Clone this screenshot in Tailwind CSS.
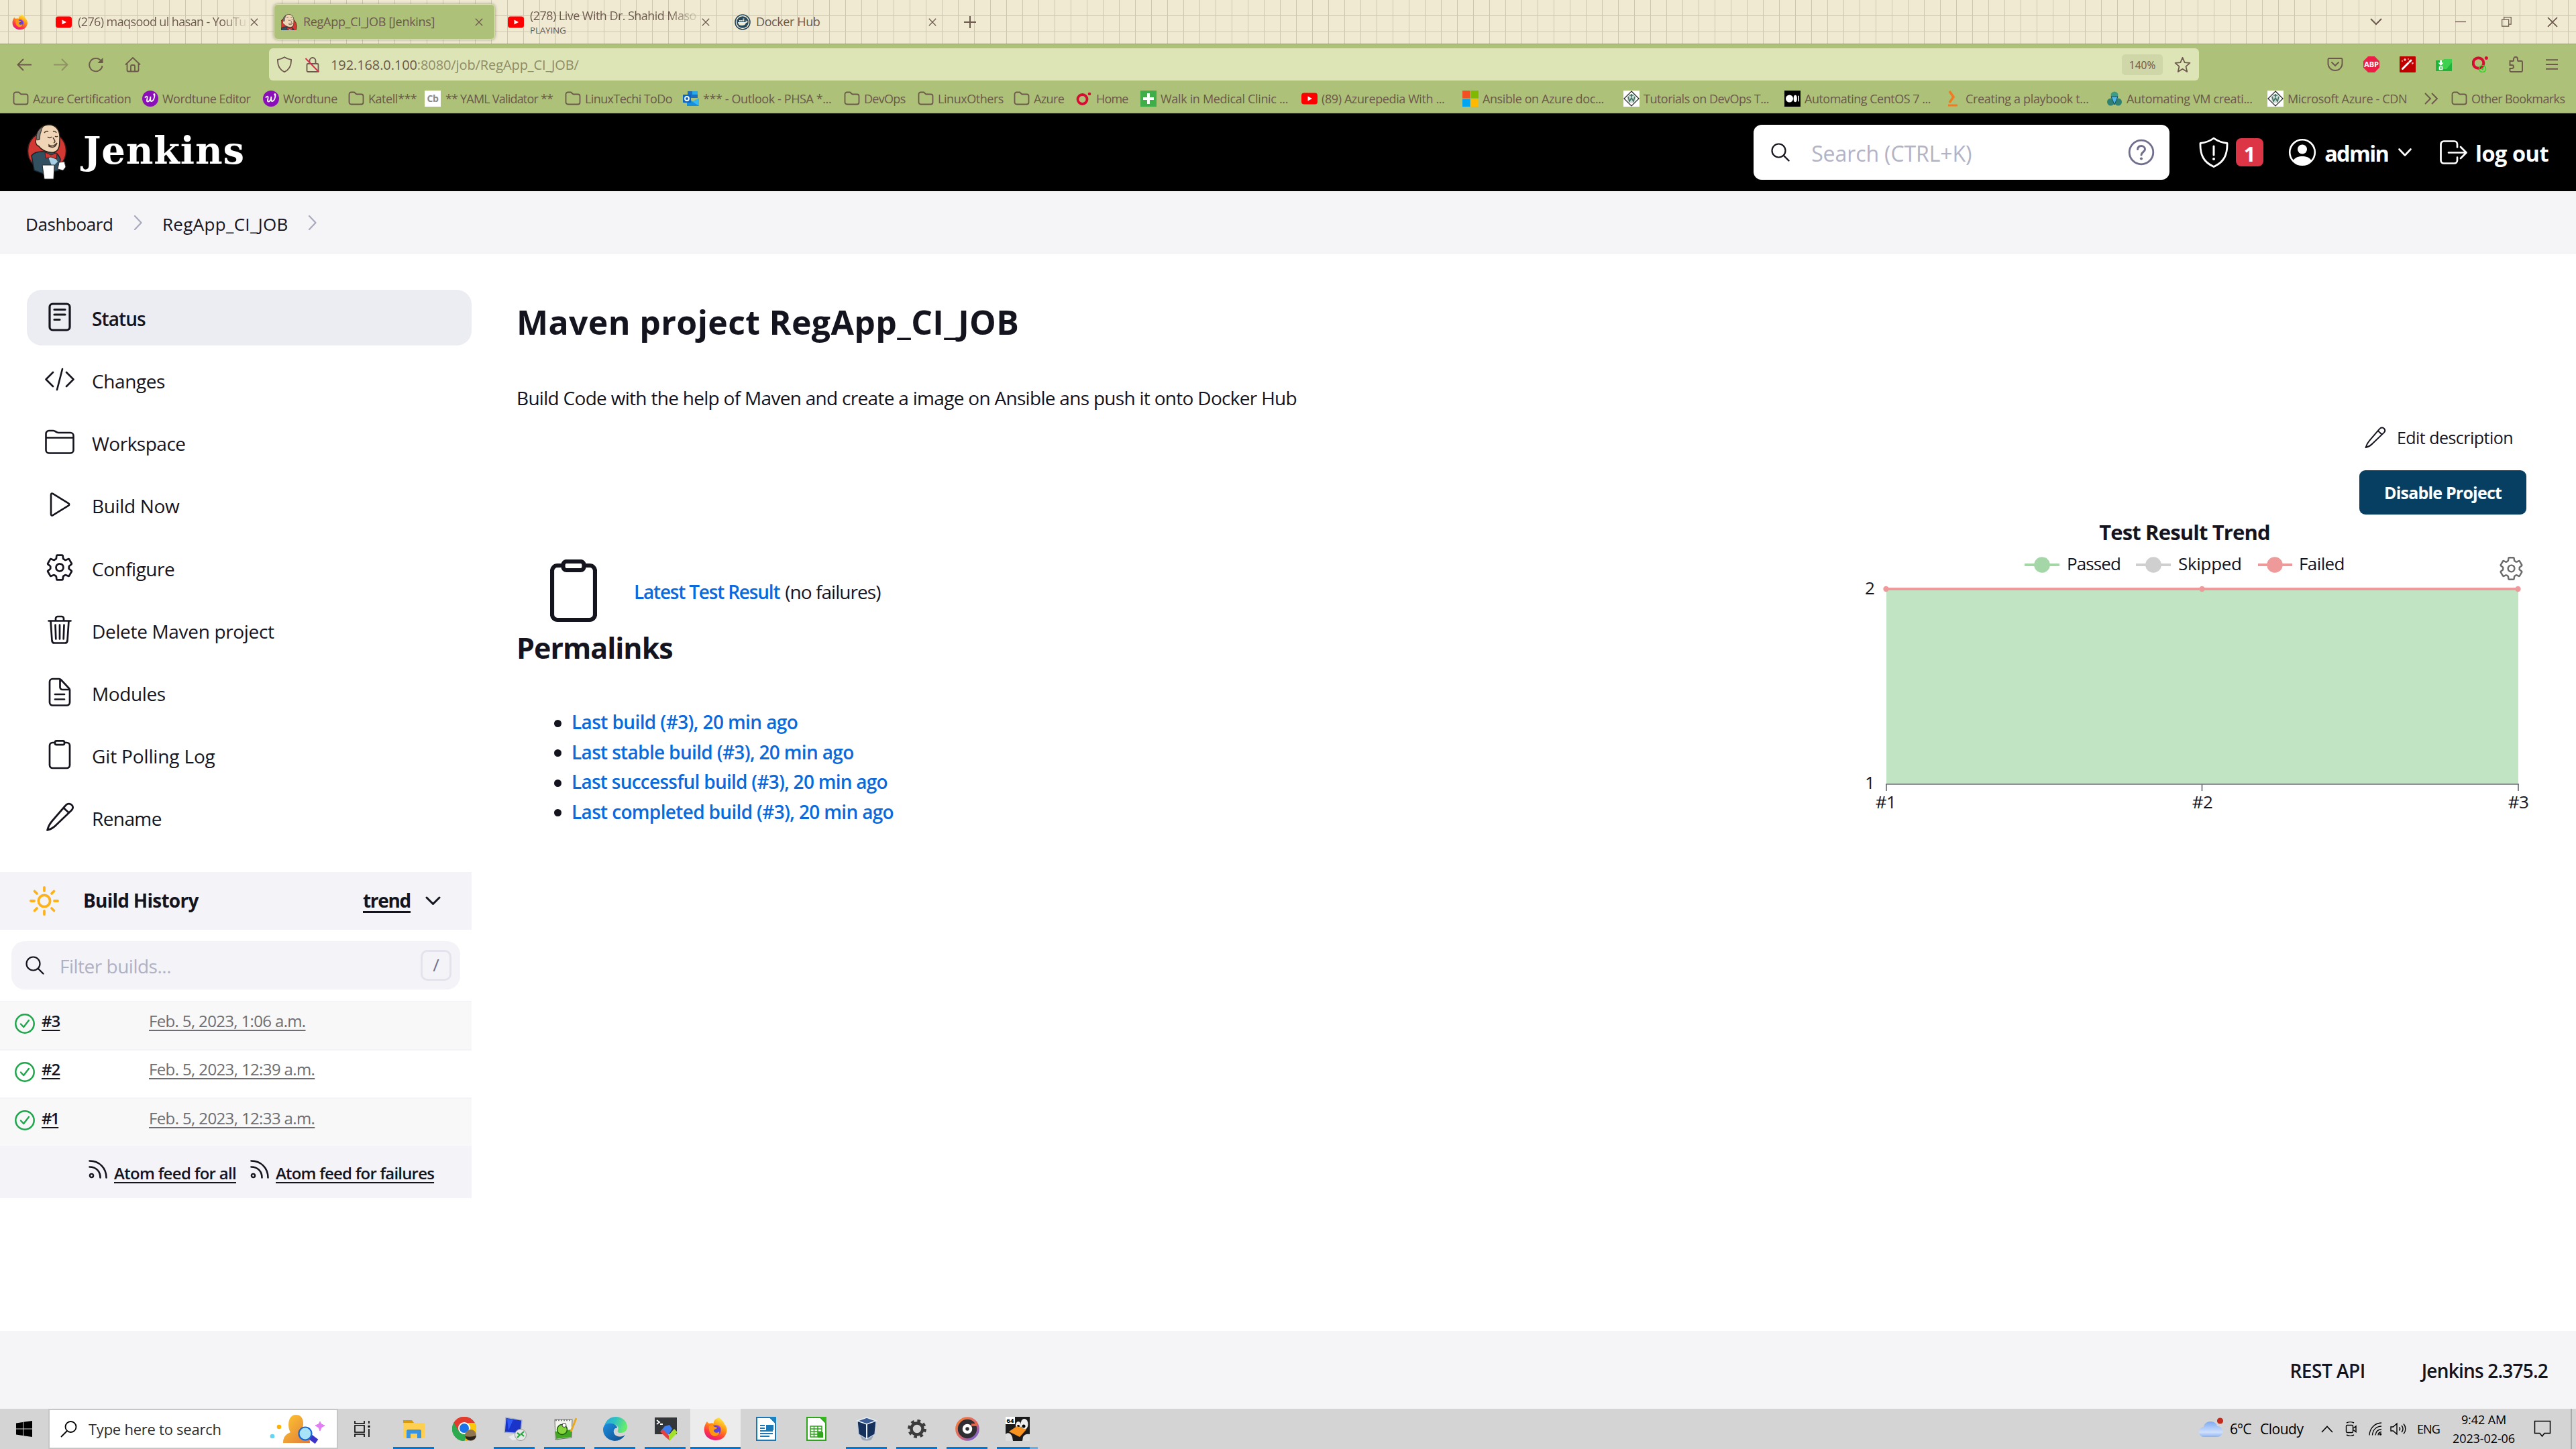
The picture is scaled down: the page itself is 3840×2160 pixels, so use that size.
<!DOCTYPE html>
<html lang="en">
<head>
<meta charset="utf-8">
<title>RegApp_CI_JOB [Jenkins]</title>
<script src="https://cdn.jsdelivr.net/npm/@tailwindcss/browser@4"></script>
</head>
<body class="w-[3840px] h-[2160px] overflow-hidden bg-white flex flex-col font-['Open_Sans','Noto_Sans',sans-serif] text-[#14141f]">

<svg class="absolute size-0">
  <defs>
    <linearGradient id="ffg" x1="0.8" y1="0" x2="0.3" y2="1"><stop offset="0" stop-color="#fff44f"/><stop offset=".4" stop-color="#ff980e"/><stop offset=".75" stop-color="#ff3647"/><stop offset="1" stop-color="#e31587"/></linearGradient>
    <linearGradient id="edg" x1="0" y1="0" x2="1" y2=".3"><stop offset="0" stop-color="#2ba6e1"/><stop offset=".5" stop-color="#2fc2c0"/><stop offset="1" stop-color="#66eb6e"/></linearGradient>
    <linearGradient id="edb" x1="0" y1="0" x2="1" y2="1"><stop offset="0" stop-color="#1b8fe0"/><stop offset="1" stop-color="#114a8b"/></linearGradient>
    <linearGradient id="org" x1="0" y1="0" x2="1" y2="1"><stop offset="0" stop-color="#ffc72e"/><stop offset="1" stop-color="#e07b3c"/></linearGradient>
    <linearGradient id="mus" x1="0" y1="0" x2="1" y2="1"><stop offset="0" stop-color="#ff7b2e"/><stop offset=".5" stop-color="#d86a6a"/><stop offset="1" stop-color="#6a5ae0"/></linearGradient>
    <linearGradient id="cld" x1="0" y1="0" x2="0" y2="1"><stop offset="0" stop-color="#7fabf2"/><stop offset=".7" stop-color="#cfe0fb"/><stop offset="1" stop-color="#8cb2f4"/></linearGradient>
  </defs>
  <symbol id="firefox" viewBox="0 0 36 36"><path d="M23 1c5 4 7 7 8 10 3 3 4 8 3 12-2 8-8 12-16 12S2 30 1 22C0 16 2 11 5 7c1 2 2 3 4 3 2-1 4-1 6 0-1-5 4-8 8-9z" fill="url(#ffg)"/><circle cx="18" cy="20" r="7.500" fill="#5b45d8"/><path d="M8 14c3-2 6-1 8 1 3 0 4 1 4 2-2 2-5 1-5 4 1 3 5 4 8 1 1 4-3 7-7 7-6-1-9-8-8-15z" fill="#ff980e"/><path d="M18 13c4-1 8 2 8 6l-3-3z" fill="#b833e1"/></symbol>
  <symbol id="yt" viewBox="0 0 24 24"><rect y="3.500" width="24" height="17" rx="4" fill="#f00"/><path d="M9.500 8.500v7l6.500-3.500z" fill="#fff"/></symbol>
  <symbol id="x" viewBox="0 0 12 12"><path d="M.8.8l10.400 10.400M11.200.8L.8 11.200" stroke="#6c584c" stroke-width="1.300" fill="none"/></symbol>
  <symbol id="folder" viewBox="0 0 24 24"><path d="M1.500 5.500a3 3 0 013-3h4.500l3.500 3h7a3 3 0 013 3v9a3 3 0 01-3 3h-15a3 3 0 01-3-3z" fill="none" stroke="#6c584c" stroke-width="1.800"/></symbol>
  <symbol id="word" viewBox="0 0 24 24"><circle cx="12" cy="12" r="12" fill="#8b0fb8"/><path d="M4.500 10c2.500-2.500 3.500-1.500 3 1.500-.6 3-1 5 .7 5 2.200 0 3.800-4 4.300-7.500-.4 3.500-.6 7 1.400 7 2.600 0 5-6 4.600-10-.2-1.500-1.400-1-1.200.5" fill="none" stroke="#fff" stroke-width="1.800" stroke-linecap="round"/></symbol>
  <symbol id="mantra" viewBox="0 0 24 24"><rect width="24" height="24" fill="#fff"/><path d="M12 1l11 11-11 11L1 12z" fill="none" stroke="#222" stroke-width="1.200"/><circle cx="12" cy="12" r="6.500" fill="#cfd8d2"/><path d="M7 9l2 7 3-5 3 5 2-7M12 5v5M9 7h6" stroke="#3e7466" stroke-width="1.600" fill="none"/></symbol>
  <symbol id="man" viewBox="0 0 60 84">
    <ellipse cx="30" cy="40" rx="28.500" ry="29" fill="#d33833" stroke="#3a1a1a" stroke-width="1.500"/>
    <path d="M7 47c3-4 10-6 16-6l16 1c6 1 9 5 11 10l-3 17-22 5-14-5z" fill="#335061" stroke="#16242c" stroke-width="1.500"/>
    <path d="M30 46l12 0-2 16z" fill="#fff"/><path d="M33 52l7-5 6 9-8 8z" fill="#a9cfe4"/>
    <path d="M16 16C18 5 26 1 33 1c10 0 16 8 16 18 0 12 0 21-9 23-8 1-18-3-22-9-4-1-6-6-4-11 0-2 2-4 2-6z" fill="#f0d6b7" stroke="#2b2018" stroke-width="1.400"/>
    <path d="M14 22c0-9 3-15 11-19-4 4-3 8-5 11l-1 9-3 1z" fill="#7a7674" stroke="#2b2018"/>
    <path d="M26 13c2-3 4-3 6-2M39 11c2-1 4 0 5 2M31 19c2 2 4 2 6 0M42 18c1 1 3 1 4 0M39 20c2 4 5 6 1 8M33 31c4 3 9 1 12-3-2 6-6 8-12 5z" fill="none" stroke="#4a372a" stroke-width="1.500"/>
    <path d="M27 42l9 4 9-3-1 9-8-3-8 2z" fill="#d33833" stroke="#4d1a18"/>
    <path d="M23 61h18l-1 21H26z" fill="#fff" stroke="#222"/><path d="M48 57l8-1 2 8-4 5-8-2z" fill="#fff" stroke="#333"/>
  </symbol>
  <symbol id="medium" viewBox="0 0 24 24"><rect width="24" height="24" fill="#000"/><circle cx="7.500" cy="12" r="5.500" fill="#fff"/><ellipse cx="16.200" cy="12" rx="2.600" ry="5.200" fill="#fff"/><rect x="20" y="7.500" width="1.600" height="9" rx=".8" fill="#fff"/></symbol>

  <symbol id="status" viewBox="0 0 44 44"><rect x="7" y="2" width="30" height="39" rx="4.500" fill="none" stroke="#14141f" stroke-width="3.200"/><path d="M14 10.500h16M14 18h16M14 25.500h8" stroke="#14141f" stroke-width="3.200" stroke-linecap="round"/></symbol>
  <symbol id="code" viewBox="0 0 44 44"><path d="M12 11L1.500 21.500 12 32M32 11l10.500 10.500L32 32M26 6l-8 31" fill="none" stroke="#14141f" stroke-width="2.600" stroke-linecap="round" stroke-linejoin="round"/></symbol>
  <symbol id="dir" viewBox="0 0 44 44"><path d="M1.500 34V9.500a4.500 4.500 0 014.500-4.500h6.500c3 0 4 3 7.500 3h18a4.500 4.500 0 014.500 4.500V34a4.500 4.500 0 01-4.500 4.500H6A4.500 4.500 0 011.500 34zM1.500 15.500h41" fill="none" stroke="#14141f" stroke-width="2.600"/></symbol>
  <symbol id="play" viewBox="0 0 44 44"><path d="M9 7.500v29c0 1.800 1.300 2.400 2.700 1.600l23.500-14.500c1.300-.8 1.300-2.400 0-3.200L11.700 5.900C10.300 5.100 9 5.700 9 7.500z" fill="none" stroke="#14141f" stroke-width="2.600"/></symbol>
  <symbol id="gear" viewBox="0 0 512 512"><path d="M262.290 192.310a64 64 0 1057.400 57.400 64.130 64.130 0 00-57.400-57.400zM416.390 256a154.340 154.340 0 01-1.530 20.790l45.210 35.460a10.810 10.810 0 012.450 13.750l-42.770 74a10.810 10.810 0 01-13.140 4.590l-44.900-18.080a16.110 16.110 0 00-15.170 1.750A164.480 164.480 0 01325 400.800a15.940 15.940 0 00-8.820 12.140l-6.730 47.890a11.080 11.080 0 01-10.680 9.170h-85.540a11.110 11.110 0 01-10.690-8.870l-6.720-47.820a16.070 16.070 0 00-9-12.220 155.300 155.300 0 01-21.460-12.570 16 16 0 00-15.110-1.710l-44.890 18.070a10.810 10.810 0 01-13.140-4.580l-42.770-74a10.800 10.800 0 012.450-13.750l38.210-30a16.050 16.050 0 006-14.080c-.36-4.170-.58-8.330-.58-12.500s.21-8.270.58-12.350a16 16 0 00-6.070-13.940l-38.190-30A10.810 10.810 0 0149.480 186l42.770-74a10.810 10.810 0 0113.140-4.590l44.900 18.080a16.110 16.110 0 0015.170-1.750A164.480 164.480 0 01187 111.200a15.940 15.940 0 008.820-12.140l6.730-47.890A11.080 11.080 0 01213.230 42h85.540a11.110 11.110 0 0110.690 8.870l6.720 47.820a16.070 16.070 0 009 12.220 155.300 155.300 0 0121.460 12.570 16 16 0 0015.110 1.710l44.890-18.070a10.810 10.810 0 0113.140 4.580l42.770 74a10.800 10.800 0 01-2.450 13.750l-38.210 30a16.050 16.050 0 00-6.050 14.080c.33 4.140.55 8.300.55 12.470z" fill="none" stroke="currentColor" stroke-width="32" stroke-linecap="round" stroke-linejoin="round"/></symbol>
  <symbol id="trash" viewBox="0 0 44 44"><path d="M8.500 8.500l2 29.500c.2 2 1.500 3.500 3.500 3.500h16c2 0 3.300-1.500 3.500-3.500l2-29.500M5.500 8.500h33M16 8.500V5a3 3 0 013-3h6a3 3 0 013 3v3.500M22 14.500V35.500M15.500 14.500l.8 21M28.500 14.500l-.8 21" fill="none" stroke="#14141f" stroke-width="2.700" stroke-linecap="round"/></symbol>
  <symbol id="doc" viewBox="0 0 44 44"><path d="M37 19v18a4.500 4.500 0 01-4.500 4.500h-21A4.500 4.500 0 017 37V6.500A4.500 4.500 0 0111.500 2H21c1.200 0 2 .3 2.800 1.200L35.800 16c.9.9 1.200 1.800 1.200 3zM22.500 3v11.500a3.500 3.500 0 003.500 3.500h10.500M15 25h14M15 32.500h14" fill="none" stroke="#14141f" stroke-width="2.700" stroke-linecap="round" stroke-linejoin="round"/></symbol>
  <symbol id="clip" viewBox="0 0 44 44"><path d="M29 4h3.500A4.500 4.500 0 0137 8.500v29a4.500 4.500 0 01-4.500 4.500h-21A4.500 4.500 0 017 37.500v-29A4.500 4.500 0 0111.500 4H15" fill="none" stroke="#14141f" stroke-width="2.700"/><rect x="15" y="1.400" width="14" height="5.800" rx="2.200" fill="none" stroke="#14141f" stroke-width="2.700"/></symbol>
  <symbol id="pencil" viewBox="0 0 44 44"><path d="M30 5.500l-19 22C7 32 5 36 3.500 41.500c5-1.500 9.500-3.500 13-7.500L40 11.500c2-2.500 2-5.500 0-7.500-2-2.500-6-2.500-8-.5zM28 8.500l7 6.500" fill="none" stroke="#14141f" stroke-width="2.700" stroke-linejoin="round"/></symbol>
  <symbol id="search" viewBox="0 0 28 28"><circle cx="11.500" cy="11.500" r="10" fill="none" stroke="#14141f" stroke-width="2.200"/><path d="M19 19l7.500 7.500" stroke="#14141f" stroke-width="2.400" stroke-linecap="round"/></symbol>
  <symbol id="ok" viewBox="0 0 30 30"><circle cx="15" cy="15" r="13.700" fill="none" stroke="#1ea64b" stroke-width="2.500"/><path d="M9 15.500l4.200 4.500 7.800-10" fill="none" stroke="#1ea64b" stroke-width="2.400" stroke-linecap="round" stroke-linejoin="round"/></symbol>
  <symbol id="rss" viewBox="0 0 28 28"><path d="M1.500 1.500C16 1.500 26.500 12 26.500 26.500M1.500 10.500c9.500 0 16 6.500 16 16" fill="none" stroke="#14141f" stroke-width="2.600" stroke-linecap="round"/><circle cx="4.500" cy="23.500" r="2.600" fill="none" stroke="#14141f" stroke-width="2.400"/></symbol>
  <symbol id="crumb" viewBox="0 0 14 22"><path d="M2 1l9.500 10L2 21" fill="none" stroke="#a9a9bd" stroke-width="2.200" stroke-linecap="round" stroke-linejoin="round"/></symbol>
</svg>

<!-- Tab strip -->
<header class="h-[66px] shrink-0 bg-[#f0ead2] border-b border-[#9c987f] bg-[linear-gradient(to_right,transparent_12px,#cdc7b0_12px,#cdc7b0_13.5px,transparent_13.5px),linear-gradient(to_bottom,transparent_23px,#cdc7b0_23px,#cdc7b0_24px,transparent_24px)] bg-[length:24px_100%,100%_24px] flex text-[18px] tracking-[-0.4px] text-[#6c584c]">
  <div class="w-[62px] flex items-center pl-[18px]"><svg class="size-[24px]"><use href="#firefox"/></svg></div>
  <div class="w-[343px] flex items-center pl-[20px] border-l border-[#bdb79f]">
    <svg class="size-[24px]"><use href="#yt"/></svg>
    <div class="ml-[9px] w-[257px]"><span class="whitespace-nowrap bg-[linear-gradient(to_right,#6c584c_86%,#6c584c1a)] bg-clip-text text-transparent tracking-[-0.6px]">(276) maqsood ul hasan - YouTu</span></div>
    <svg class="size-[12px]"><use href="#x"/></svg>
  </div>
  <div class="w-[338px] py-[6px] pl-[3px] pr-[5px] flex">
    <div class="flex-1 flex items-center bg-[#adc178] rounded-[6px] border border-[#dde5b6] shadow-[0_0_4px_#6c584c99] pl-[10px] pr-[17px]">
      <svg class="w-[24px] h-[24px]" viewBox="8 0 52 52"><use href="#man" width="60" height="84"/></svg>
      <span class="ml-[9px] flex-1 tracking-[-0.3px]">RegApp_CI_JOB [Jenkins]</span>
      <svg class="size-[12px]"><use href="#x"/></svg>
    </div>
  </div>
  <div class="w-[337px] flex items-center pl-[14px]">
    <svg class="size-[24px]"><use href="#yt"/></svg>
    <div class="ml-[9px] w-[256px] whitespace-nowrap">
      <div class="leading-[25px]"><span class="bg-[linear-gradient(to_right,#6c584c_82%,#6c584c33)] bg-clip-text text-transparent tracking-[-0.55px]">(278) Live With Dr. Shahid Maso</span></div>
      <div class="text-[13.500px] leading-[18px] tracking-[-0.2px]">PLAYING</div>
    </div>
    <svg class="size-[12px]"><use href="#x"/></svg>
  </div>
  <div class="w-[337px] flex items-center pl-[15px]">
    <svg class="size-[24px]" viewBox="0 0 24 24"><circle cx="12" cy="12" r="11" fill="#f0ead2" stroke="#27475c" stroke-width="1.600"/><circle cx="12" cy="12" r="8.800" fill="#27475c"/><path d="M5 12h11c1-.5 1-2 .5-3 1.500.5 1.500 2 1.500 2h2c-.5 1.500-2 2-3 2-1 3-3 4-6 4s-5.500-1-6-5zM7 9h2v2H7zM9.700 9h2v2h-2zM12.400 9h2v2h-2zM12.400 6.500h2v2h-2z" fill="#f0ead2"/></svg>
    <span class="ml-[8px] w-[257px]">Docker Hub</span>
    <svg class="size-[12px]"><use href="#x"/></svg>
  </div>
  <div class="w-[60px] flex items-center pl-[20px]"><svg class="size-[18px]" viewBox="0 0 18 18"><path d="M9 0v18M0 9h18" stroke="#6c584c" stroke-width="2"/></svg></div>
  <div class="ml-auto flex items-center pr-[27px]">
    <svg class="w-[18px] h-[11px]" viewBox="0 0 18 11"><path d="M1 1l8 8 8-8" fill="none" stroke="#6c584c" stroke-width="2"/></svg>
    <svg class="w-[16px] h-[16px] ml-[109px]" viewBox="0 0 16 16"><path d="M0 7.500h16" stroke="#6c584c" stroke-width="1.300"/></svg>
    <svg class="w-[15px] h-[15px] ml-[53px]" viewBox="0 0 15 15"><path d="M.7 4.200h10v10h-10zM3.700 4V.7h10.500v10.500H11" fill="none" stroke="#6c584c" stroke-width="1.200"/></svg>
    <svg class="size-[16px] ml-[53px]"><use href="#x"/></svg>
  </div>
</header>

<!-- Address bar -->
<div class="h-[60px] shrink-0 bg-[#adc178] flex items-center text-[#6c584c]">
  <div class="w-[401px] flex items-center pl-[25px] gap-[30.500px]">
    <svg class="size-[23px]" viewBox="0 0 23 23"><path d="M22 11.500H1.500M10 3l-8.500 8.500L10 20" fill="none" stroke="#6c584c" stroke-width="1.900"/></svg>
    <svg class="size-[23px] opacity-45" viewBox="0 0 23 23"><path d="M1 11.500h20.500M13 3l8.500 8.500L13 20" fill="none" stroke="#6c584c" stroke-width="1.900"/></svg>
    <svg class="size-[23px]" viewBox="0 0 23 23"><path d="M20.500 13A9.700 9.700 0 1118 5" fill="none" stroke="#6c584c" stroke-width="1.900"/><path d="M21.500 1v8h-8z" fill="#6c584c"/></svg>
    <svg class="size-[24px]" viewBox="0 0 24 24"><path d="M1 12.500L12 2l11 10.500M3.500 10v10.500a2 2 0 002 2h13a2 2 0 002-2V10M9 22v-7.500a1.500 1.500 0 011.500-1.500h3a1.500 1.500 0 011.500 1.500V22" fill="none" stroke="#6c584c" stroke-width="1.800"/></svg>
  </div>
  <div class="w-[2877px] h-[48px] bg-[#dde5b6] rounded-[6px] flex items-center pl-[11px] pr-[12px]">
    <svg class="size-[24px]" viewBox="0 0 24 24"><path d="M12 1.200c3 2 6 3 10 3.600.5 9-2.500 15-10 18.500C4.500 19.800 1.500 13.800 2 4.800c4-.6 7-1.600 10-3.600z" fill="none" stroke="#6c584c" stroke-width="1.800"/></svg>
    <svg class="size-[24px] ml-[18px]" viewBox="0 0 24 24"><path d="M7.500 11V6.500a4.500 4.500 0 019 0V11M5 11h14a1.500 1.500 0 011.500 1.500v9A1.500 1.500 0 0119 23H5a1.500 1.500 0 01-1.500-1.500v-9A1.500 1.500 0 015 11z" fill="none" stroke="#6c584c" stroke-width="1.800"/><path d="M1.500 3l20 20.500" stroke="#e22850" stroke-width="2"/></svg>
    <span class="ml-[15px] flex-1 text-[20px] tracking-[-0.1px] text-[#8e8b68] pt-[2px]"><span class="text-[#6c584c]">192.168.0.100</span>:8080/job/RegApp_CI_JOB/</span>
    <span class="w-[61px] h-[31px] rounded-[5px] bg-[#cfd6a8] text-[15.500px] text-center leading-[32px]">140%</span>
    <svg class="size-[25px] ml-[17px]" viewBox="0 0 24 24"><path d="M12 1.800l3 7 7.500.7-5.700 5 1.700 7.500-6.500-4-6.500 4 1.700-7.500-5.700-5L9 8.800z" fill="none" stroke="#6c584c" stroke-width="1.700" stroke-linejoin="round"/></svg>
  </div>
  <div class="ml-auto flex items-center gap-[30px] pr-[27px]">
    <svg class="size-[24px]" viewBox="0 0 24 24"><path d="M3 3h18a1.500 1.500 0 011.500 1.500V11a10.500 10 0 01-21 0V4.500A1.500 1.500 0 013 3zM7 9l5 5 5-5" fill="none" stroke="#6c584c" stroke-width="1.900" stroke-linecap="round"/></svg>
    <div class="size-[24px] bg-[#ed1e45] [clip-path:polygon(30%_0,70%_0,100%_30%,100%_70%,70%_100%,30%_100%,0_70%,0_30%)] text-white text-[11px] font-bold leading-[24px] text-center tracking-[-0.2px]">ABP</div>
    <svg class="size-[24px]" viewBox="0 0 24 24"><rect width="24" height="24" rx="1" fill="#c00000"/><path d="M4.500 18.500l8.500-8.500M15 8l2-2" stroke="#fff" stroke-width="3" stroke-linecap="round"/><path d="M8 3v4M6 5h4M19 9v3M18 10h3M13 3v2M4 6v2" stroke="#fff" stroke-width="1"/></svg>
    <svg class="size-[24px]" viewBox="0 0 24 24"><path d="M0 6h10l3-2h11v18H0z" fill="#1eb53a"/><path d="M10 6l3-2h11v5l-8 10H4z" fill="#3fd04f"/><path d="M7.500 6v4" stroke="#fff" stroke-width="3"/><path d="M3.500 9.500h8l-4 4.500z" fill="#fff"/><path d="M5.500 15.500h4v4h-4z" fill="none" stroke="#fff" stroke-width="1.500"/></svg>
    <svg class="size-[24px]" viewBox="0 0 24 24"><circle cx="9.500" cy="10" r="7.800" fill="none" stroke="#d80b32" stroke-width="4"/><circle cx="21.300" cy="2.500" r="2.500" fill="#d80b32"/><circle cx="15.500" cy="18.500" r="5" fill="none" stroke="#19e01f" stroke-width="1.400"/><circle cx="15.500" cy="18.500" r="1.800" fill="#19e01f"/></svg>
    <svg class="size-[24px]" viewBox="0 0 24 24"><path d="M2.500 7h4.500a1 1 0 001-1V4a3 3 0 016 0v2a1 1 0 001 1h4.500A1.500 1.500 0 0121 8.500v13a1.500 1.500 0 01-1.500 1.500H4a1.500 1.500 0 01-1.500-1.500V18h3a2.500 2.500 0 000-5h-3z" fill="none" stroke="#6c584c" stroke-width="1.900"/></svg>
    <svg class="w-[18px] h-[16px] ml-[2px]" viewBox="0 0 18 16"><path d="M0 1.200h18M0 8h18M0 14.800h18" stroke="#6c584c" stroke-width="1.900"/></svg>
  </div>
</div>

<!-- Bookmarks bar -->
<nav class="h-[43px] shrink-0 bg-[#adc178] border-b border-[#98a26e] flex items-center pl-[19px] text-[18px] tracking-[-0.45px] text-[#6c584c] whitespace-nowrap [&>div]:flex [&>div]:items-center [&>div]:gap-[6px] [&>div]:shrink-0 [&_svg]:size-[24px] [&_svg]:shrink-0">
  <div class="w-[193px]"><svg><use href="#folder"/></svg>Azure Certification</div>
  <div class="w-[180px]"><svg><use href="#word"/></svg><span class="tracking-[-0.52px]">Wordtune Editor</span></div>
  <div class="w-[127px]"><svg><use href="#word"/></svg>Wordtune</div>
  <div class="w-[114px]"><svg><use href="#folder"/></svg>Katell***</div>
  <div class="w-[209px]"><span class="size-[24px] bg-white text-[#8a8a8a] text-[14px] font-bold text-center leading-[24px]">Cb</span><span class="ml-[1px] tracking-[-0.8px]">** YAML Validator **</span></div>
  <div class="w-[176px]"><svg><use href="#folder"/></svg><span class="tracking-[-0.6px]">LinuxTechi ToDo</span></div>
  <div class="w-[240px]"><svg viewBox="0 0 24 24"><path d="M7 1h15v10H7z" fill="#1b6ec2"/><path d="M14 1h8v5h-8z" fill="#28a8ea"/><path d="M6 11l9 5 9-5v12H6z" fill="#35b8f1"/><path d="M6 11l18 12H6z" fill="#1490df"/><rect y="6" width="12" height="12" rx="1" fill="#0a66c2"/><circle cx="6" cy="12" r="3" fill="none" stroke="#fff" stroke-width="1.800"/></svg><span class="tracking-[-0.4px]">*** - Outlook - PHSA *...</span></div>
  <div class="w-[110px]"><svg><use href="#folder"/></svg><span class="tracking-[-0.7px]">DevOps</span></div>
  <div class="w-[143px]"><svg><use href="#folder"/></svg>LinuxOthers</div>
  <div class="w-[93px]"><svg><use href="#folder"/></svg><span class="tracking-[-0.6px]">Azure</span></div>
  <div class="w-[96px]"><svg viewBox="0 0 24 24"><circle cx="9.500" cy="13" r="7" fill="none" stroke="#d80b32" stroke-width="3.800"/><circle cx="20" cy="5" r="2.300" fill="#d80b32"/></svg><span class="tracking-[-0.8px]">Home</span></div>
  <div class="w-[240px]"><svg viewBox="0 0 24 24"><rect width="24" height="24" fill="#3fae49"/><path d="M12 4v16M4 12h16" stroke="#fff" stroke-width="4"/></svg><span class="tracking-[-0.33px]">Walk in Medical Clinic ...</span></div>
  <div class="w-[240px]"><svg><use href="#yt"/></svg><span class="tracking-[-0.4px]">(89) Azurepedia With ...</span></div>
  <div class="w-[240px]"><svg viewBox="0 0 24 24"><path d="M0 0h11.500v11.500H0z" fill="#f25022"/><path d="M12.500 0H24v11.500H12.500z" fill="#7fba00"/><path d="M0 12.500h11.500V24H0z" fill="#00a4ef"/><path d="M12.500 12.500H24V24H12.500z" fill="#ffb900"/></svg><span class="tracking-[-0.4px]">Ansible on Azure doc...</span></div>
  <div class="w-[240px]"><svg><use href="#mantra"/></svg><span class="tracking-[-0.5px]">Tutorials on DevOps T...</span></div>
  <div class="w-[240px]"><svg><use href="#medium"/></svg><span class="tracking-[-0.5px]">Automating CentOS 7 ...</span></div>
  <div class="w-[240px]"><svg viewBox="0 0 24 24"><path d="M6 1l6 8.500L6 18" fill="none" stroke="#f47a20" stroke-width="3.500"/><path d="M4 22h14" stroke="#f47a20" stroke-width="3"/></svg><span class="tracking-[-0.35px]">Creating a playbook t...</span></div>
  <div class="w-[240px]"><svg viewBox="0 0 24 24"><circle cx="12" cy="7" r="5.500" fill="#3e9b86"/><circle cx="6.500" cy="17" r="5.500" fill="#2f8272"/><circle cx="17.500" cy="17" r="5.500" fill="#2f8272"/><path d="M7 9h10l-5 12z" fill="#4fb7e8" stroke="#174a5a"/></svg><span class="tracking-[-0.35px]">Automating VM creati...</span></div>
  <div class="w-[233px]"><svg><use href="#mantra"/></svg><span class="tracking-[-0.35px]">Microsoft Azure - CDN</span></div>
  <div class="w-[41px]"><svg viewBox="0 0 24 24"><path d="M2 4l8 8-8 8M12 4l8 8-8 8" fill="none" stroke="#6c584c" stroke-width="1.900"/></svg></div>
  <div><svg><use href="#folder"/></svg><span class="tracking-[-0.6px]">Other Bookmarks</span></div>
</nav>

<!-- Jenkins header -->
<div class="h-[116px] shrink-0 bg-black flex items-center text-white pl-[40px]">
  <svg class="w-[60px] h-[84px]"><use href="#man"/></svg>
  <span class="ml-[24px] -mt-[6px] font-['DejaVu_Serif',serif] font-bold text-[56px] tracking-[0.8px] leading-none">Jenkins</span>
  <div class="ml-auto w-[620px] h-[82px] rounded-[12px] bg-white flex items-center pl-[26px] pr-[22px]">
    <svg class="size-[28px]"><use href="#search"/></svg>
    <span class="ml-[32px] flex-1 text-[32px] tracking-[-0.1px] text-[#b3b3c6] pt-[3px]">Search (CTRL+K)</span>
    <svg class="size-[40px]" viewBox="0 0 40 40"><circle cx="20" cy="20" r="17.800" fill="none" stroke="#6f6f8d" stroke-width="2.800"/><path d="M14.500 15.500c.5-3.500 3-5 5.500-5s5.500 1.800 5.500 5c0 4-5.500 4-5.500 8.500" fill="none" stroke="#6f6f8d" stroke-width="3" stroke-linecap="round"/><circle cx="20" cy="29.500" r="2.100" fill="#6f6f8d"/></svg>
  </div>
  <div class="flex items-center ml-[44px]">
    <svg class="w-[44px] h-[46px]" viewBox="0 0 44 46"><path d="M22 2c6 4.500 12 6.500 20 7.500.500 17-4.500 28-20 35C6.500 37.500 1.500 26.500 2 9.500 10 8.500 16 6.500 22 2z" fill="none" stroke="#fff" stroke-width="2.800" stroke-linejoin="round"/><path d="M22 14v13" stroke="#fff" stroke-width="3" stroke-linecap="round"/><circle cx="22" cy="33" r="2" fill="#fff"/></svg>
    <span class="ml-[11px] w-[41px] h-[42px] rounded-[8px] bg-[#dc3545] text-[31px] font-bold leading-[46px] text-center">1</span>
    <svg class="ml-[37px] size-[42px]" viewBox="0 0 42 42"><circle cx="21" cy="21" r="18.800" fill="none" stroke="#fff" stroke-width="2.600"/><circle cx="21" cy="16.500" r="7" fill="#fff"/><path d="M7 34c3-6 9-7 14-7s11 1 14 7c-4 4-9 6-14 6s-10-2-14-6z" fill="#fff"/></svg>
    <span class="ml-[12px] text-[32.500px] font-bold tracking-[-1.700px] pt-[4px]">admin</span>
    <svg class="ml-[15px] w-[20px] h-[12px]" viewBox="0 0 20 12"><path d="M1.500 1.500l8.500 9 8.500-9" fill="none" stroke="#fff" stroke-width="2.600" stroke-linecap="round" stroke-linejoin="round"/></svg>
    <svg class="ml-[42px] w-[42px] h-[36px]" viewBox="0 0 42 36"><path d="M26 10.500V6a4.500 4.500 0 00-4.500-4.500H6A4.500 4.500 0 001.500 6v24A4.500 4.500 0 006 34.500h15.500A4.500 4.500 0 0026 30v-4.500M31 10l8.500 8.500-8.500 8.500M13 18.500h26" fill="none" stroke="#fff" stroke-width="2.700" stroke-linecap="round" stroke-linejoin="round"/></svg>
    <span class="ml-[11px] mr-[41px] text-[32.500px] font-bold tracking-[-0.500px] pt-[4px]">log out</span>
  </div>
</div>

<!-- Breadcrumbs -->
<div class="h-[94px] shrink-0 bg-[#f5f5f8] flex items-center pl-[38px] text-[26px]">
  <span class="w-[161px] tracking-[-0.4px] pt-[4px]">Dashboard</span>
  <svg class="w-[14px] h-[22px]"><use href="#crumb"/></svg>
  <span class="ml-[29px] w-[217px] tracking-[0.32px] pt-[4px]">RegApp_CI_JOB</span>
  <svg class="w-[14px] h-[22px]"><use href="#crumb"/></svg>
</div>

<!-- Page body -->
<div class="h-[1605px] shrink-0 flex">
  <aside class="w-[703px] shrink-0 pt-[53px] flex flex-col">
    <ul class="pl-[40px] flex flex-col gap-[10.150px] text-[28px] tracking-[-0.6px] [&>li]:h-[83px] [&>li]:flex [&>li]:items-center [&>li]:pl-[27px] [&>li]:gap-[26px] [&>li]:rounded-[22px] [&_svg]:size-[44px] [&_svg]:-mt-[1px] [&_span]:pt-[3px]">
      <li class="bg-[#ecedf3] font-semibold"><svg><use href="#status"/></svg><span class="tracking-[-0.9px]">Status</span></li>
      <li><svg><use href="#code"/></svg><span class="tracking-[-0.4px]">Changes</span></li>
      <li><svg><use href="#dir"/></svg><span class="tracking-[-0.5px]">Workspace</span></li>
      <li><svg><use href="#play"/></svg><span class="tracking-[-0.35px]">Build Now</span></li>
      <li><svg><use href="#gear"/></svg><span class="tracking-[-0.5px]">Configure</span></li>
      <li><svg><use href="#trash"/></svg><span class="tracking-[-0.33px]">Delete Maven project</span></li>
      <li><svg><use href="#doc"/></svg><span class="tracking-[-0.4px]">Modules</span></li>
      <li><svg><use href="#clip"/></svg><span class="tracking-[-0.15px]">Git Polling Log</span></li>
      <li><svg><use href="#pencil"/></svg><span>Rename</span></li>
    </ul>

    <div class="mt-[40px] h-[86px] bg-[#f3f3f8] flex items-center pl-[43px] text-[28px] font-bold">
      <svg class="size-[46px]" viewBox="0 0 46 46"><g fill="none" stroke="#feb219" stroke-width="3.800" stroke-linecap="round"><circle cx="23" cy="23" r="8.600"/><path d="M23 3v5M23 38v5M3 23h5M38 23h5M8.500 8.500l3.500 3.500M34 34l3.500 3.500M37.500 8.500L34 12M12 34l-3.500 3.500"/></g></svg>
      <span class="ml-[35px] w-[417px] tracking-[-0.75px] -mt-[2px]">Build History</span>
      <span class="w-[71px] tracking-[-1.300px] -mt-[2px] underline decoration-[2.500px] underline-offset-[5px]">trend</span>
      <svg class="ml-[22px] w-[23px] h-[14px]" viewBox="0 0 23 14"><path d="M2 2l9.500 9.500L21 2" fill="none" stroke="#14141f" stroke-width="3" stroke-linecap="round" stroke-linejoin="round"/></svg>
    </div>
    <div class="h-[106px] px-[17px] py-[17px] flex">
      <div class="flex-1 rounded-[20px] bg-[#f3f3f8] flex items-center pl-[21px] pr-[13px]">
        <svg class="size-[28px]"><use href="#search"/></svg>
        <span class="ml-[23px] flex-1 text-[28px] tracking-[-0.5px] text-[#b0b0c4] pt-[2px]">Filter builds...</span>
        <span class="size-[46px] rounded-[10px] border-[3px] border-[#e4e3ed] text-[26px] text-[#6f6f8d] font-medium text-center leading-[38px]">/</span>
      </div>
    </div>
    <div class="flex flex-col text-[24px] [&>div]:flex [&>div]:items-start [&>div]:border-t-2 [&>div]:border-[#f3f3f8] [&>div]:pl-[22px] [&>div]:pt-[17px] [&_svg]:size-[30px] [&_u]:leading-[36px] [&_u]:decoration-[1.500px] [&_u]:underline-offset-[4px]">
      <div class="h-[72px] bg-[#f8f8f8]"><svg><use href="#ok"/></svg><span class="ml-[10px] w-[160px] font-semibold tracking-[-0.9px] -mt-[7px]"><u>#3</u></span><span class="-mt-[7px] text-[#6e6e72] tracking-[-0.65px]"><u>Feb. 5, 2023, 1:06 a.m.</u></span></div>
      <div class="h-[72px]"><svg><use href="#ok"/></svg><span class="ml-[10px] w-[160px] font-semibold tracking-[-0.9px] -mt-[7px]"><u>#2</u></span><span class="-mt-[7px] text-[#6e6e72] tracking-[-0.62px]"><u>Feb. 5, 2023, 12:39 a.m.</u></span></div>
      <div class="h-[72px] bg-[#f8f8f8]"><svg><use href="#ok"/></svg><span class="ml-[10px] w-[160px] font-semibold tracking-[-2px] -mt-[6px]"><u>#1</u></span><span class="-mt-[6px] text-[#6e6e72] tracking-[-0.62px]"><u>Feb. 5, 2023, 12:33 a.m.</u></span></div>
    </div>
    <div class="h-[78px] bg-[#f3f3f8] flex items-center pl-[132px] text-[24px] font-semibold whitespace-nowrap [&_u]:decoration-[1.500px] [&_u]:underline-offset-[4px]">
      <svg class="size-[28px] shrink-0 -mt-[9px]"><use href="#rss"/></svg>
      <span class="ml-[10px] w-[182px] tracking-[-0.7px] pt-[3px]"><u>Atom feed for all</u></span>
      <svg class="size-[28px] shrink-0 ml-[21px] -mt-[9px]"><use href="#rss"/></svg>
      <span class="ml-[10px] tracking-[-0.8px] pt-[3px]"><u>Atom feed for failures</u></span>
    </div>
  </aside>

  <main class="flex-1 pl-[67px] pr-[74px] pt-[61px] flex flex-col">
    <h1 class="text-[50px] leading-[80px] font-bold tracking-[0.35px]">Maven project RegApp_CI_JOB</h1>
    <p class="mt-[51px] text-[28px] leading-[44px] tracking-[-0.7px]">Build Code with the help of Maven and create a image on Ansible ans push it onto Docker Hub</p>
    <div class="flex justify-between">
      <section>
        <div class="mt-[219px] h-[94px] flex items-center text-[28px]">
          <svg class="ml-[50px] w-[70px] h-[94px]" viewBox="0 0 70 94"><path d="M50 9h9a8 8 0 018 8v65a8 8 0 01-8 8H11a8 8 0 01-8-8V17a8 8 0 018-8h9" fill="none" stroke="#14141f" stroke-width="6.200"/><rect x="19.500" y="3" width="31" height="13" rx="5" fill="none" stroke="#14141f" stroke-width="6.200"/></svg>
          <span class="ml-[55px] pt-[2px] font-semibold tracking-[-1.200px] text-[#0b6adb]">Latest Test Result</span>
          <span class="ml-[8px] pt-[2px] tracking-[-0.95px]">(no failures)</span>
        </div>
        <h2 class="mt-[8px] text-[43px] leading-[60px] font-bold tracking-[-1px]">Permalinks</h2>
        <ul class="mt-[58px] text-[28px] leading-[44.500px] font-semibold tracking-[-0.66px] text-[#0b6adb] [&>li]:flex [&>li]:items-center [&_i]:size-[11px] [&_i]:rounded-full [&_i]:bg-[#14141f] [&_i]:ml-[56px] [&_i]:mr-[15px] [&_i]:mt-[4px]">
          <li><i></i><span class="tracking-[-0.6px]">Last build (#3), 20 min ago</span></li>
          <li><i></i>Last stable build (#3), 20 min ago</li>
          <li><i></i><span class="tracking-[-0.74px]">Last successful build (#3), 20 min ago</span></li>
          <li><i></i>Last completed build (#3), 20 min ago</li>
        </ul>
      </section>
      <section class="w-[996px] flex flex-col items-end pt-[12px]">
        <div class="h-[50px] flex items-center pr-[20px] text-[25px] tracking-[-0.53px]">
          <svg class="size-[33px] mr-[16px]"><use href="#pencil"/></svg><span class="pt-[2px]">Edit description</span>
        </div>
        <button class="mt-[24px] w-[249px] h-[66px] rounded-[9px] bg-[#073f63] text-white text-[25px] font-bold tracking-[-0.8px] pt-[1px]">Disable Project</button>
        <svg class="w-[1016px] h-[453px] -mr-[20px] text-[26px] tracking-[-0.6px]" viewBox="2770 767 1016 453" fill="#14141f">
          <text x="3256.500" y="805" text-anchor="middle" class="text-[31px] font-bold tracking-[-0.85px]">Test Result Trend</text>
          <g stroke-width="4"><path d="M3018 842h52" stroke="#a5d6a7"/><path d="M3184 842h52" stroke="#cfcfcf"/><path d="M3366 842h51" stroke="#ee9a9a"/></g>
          <circle cx="3044" cy="842" r="11.800" fill="#a5d6a7"/><circle cx="3210" cy="842" r="11.800" fill="#cfcfcf"/><circle cx="3391" cy="842" r="11.800" fill="#ee9a9a"/>
          <text x="3081" y="850" class="tracking-[-0.9px]">Passed</text><text x="3247" y="850" class="tracking-[-0.300px]">Skipped</text><text x="3427" y="850">Failed</text>
          <use href="#gear" x="3724" y="828" width="39" height="39" class="text-[#6b6b6b]"/>
          <path d="M2812 878h942v291h-942z" fill="#c1e4c3"/>
          <path d="M2812 878h942" stroke="#ee9a9a" stroke-width="4"/>
          <circle cx="2811.500" cy="878" r="4.200" fill="#ee9a9a"/><circle cx="3282.500" cy="878" r="4.200" fill="#ee9a9a"/><circle cx="3753.500" cy="878" r="4.200" fill="#ee9a9a"/>
          <path d="M2811 1169h944M2812 1169v10M3282.500 1169v10M3754 1169v10" stroke="#6e7079" stroke-width="1.700"/>
          <text x="2780" y="886">2</text><text x="2780" y="1176">1</text>
          <g text-anchor="middle"><text x="2811" y="1205">#1</text><text x="3283" y="1205">#2</text><text x="3754" y="1205">#3</text></g>
        </svg>
      </section>
    </div>
  </main>
</div>

<footer class="h-[116px] shrink-0 bg-[#f5f5f8] flex items-center justify-end pr-[42px] gap-[84px] text-[28px] font-semibold pt-[2px]">
  <span class="tracking-[-0.5px]">REST API</span><span class="tracking-[-0.8px]">Jenkins 2.375.2</span>
</footer>

<!-- Windows taskbar -->
<div class="h-[60px] shrink-0 bg-[#d4d4d4] flex items-stretch text-black">
  <div class="w-[72px] flex items-center pl-[24px]"><svg class="size-[24px]" viewBox="0 0 24 24"><path d="M0 3.500l10-1.500v9.500H0zM11 1.800L24 0v11.500H11zM0 12.500h10V22L0 20.500zM11 12.500h13V24l-13-1.800z"/></svg></div>
  <div class="w-[432px] border-2 border-[#c6c6c6] bg-white flex items-center pl-[16px] pr-[16px]">
    <svg class="size-[25px]" viewBox="0 0 25 25"><circle cx="15.500" cy="9" r="8" fill="none" stroke="#000" stroke-width="1.800"/><path d="M10 15L1 24" stroke="#000" stroke-width="1.800"/></svg>
    <span class="ml-[17px] flex-1 text-[22px] tracking-[-0.25px] text-[#2d2d2d] pt-[1px]">Type here to search</span>
    <svg class="w-[84px] h-[44px]" viewBox="0 0 84 44"><path d="M20 43c0-9 4-13 11-16-5-8-4-26 8-26s13 14 9 24c8 3 12 9 12 18z" fill="url(#org)"/><path d="M58 32l12 9" stroke="#3a35c8" stroke-width="8"/><circle cx="53" cy="29" r="9.500" fill="#a8e4f7" stroke="#1a66d6" stroke-width="2.200"/><circle cx="14" cy="19" r="3.300" fill="#ffb300"/><circle cx="4" cy="33" r="3.300" fill="#62d6f0"/><path d="M75 11l2 4 5 2-5 3-2 5-2-5-5-3 5-2z" fill="#e27df5" stroke="#e27df5" stroke-linejoin="round"/></svg>
  </div>
  <div class="w-[75px] flex items-center pl-[24px]"><svg class="size-[24px]" viewBox="0 0 24 24"><path d="M1 0v4h14V0M1 24v-4h14v4M1 7h14v10H1zM22 0v4M22 12v12" fill="none" stroke="#000" stroke-width="1.600"/><rect x="20.500" y="7" width="3" height="3"/></svg></div>
  <div class="flex [&>div]:w-[75px] [&>div]:flex [&>div]:flex-col [&>div]:items-center [&>div]:justify-between [&>div]:pt-[12px] [&_svg]:size-[36px] [&_i]:w-[61px] [&_i]:h-[3px] [&_i]:bg-[#0078d7]">
    <div><svg viewBox="0 0 36 36"><path d="M2 5h13l3 4H2z" fill="#d99a0b"/><path d="M2 9h32v22H2z" fill="#ffcf52"/><path d="M7 32V21c0-1 1-2 2-2h18c1 0 2 1 2 2v11h-6v-7H13v7z" fill="#3a94dd"/></svg><i></i></div>
    <div><svg viewBox="0 0 36 36"><circle cx="18" cy="18" r="18" fill="#2da94f"/><path d="M2.400 9A18 18 0 0133.600 9H18z" fill="#e33b2e"/><path d="M33.600 9A18 18 0 0118 36l8-14-2-13z" fill="#fdc70c"/><path d="M2.400 9A18 18 0 0133.600 9H18a9 9 0 00-8 13z" fill="#e33b2e"/><path d="M2.400 9A18 18 0 0018 36l7-11-15-3z" fill="#2da94f"/><circle cx="18" cy="17" r="9" fill="#fff"/><circle cx="18" cy="17" r="7" fill="#1a73e8"/><circle cx="27.500" cy="27.500" r="8.500" fill="#8f7550"/><path d="M19.500 29c4 1 11 1 16.500-1a8.500 8.500 0 01-16.500 1z" fill="#2a231b"/></svg></div>
    <div><svg viewBox="0 0 36 36"><path d="M5 1l24 4-2 20L3 23z" fill="#1a33c9" stroke="#aab4c4" stroke-width="1.500"/><path d="M7 3l9 1.500L9 20z" fill="#2e5af5"/><path d="M9 30l10-5 6 8-10 2z" fill="#e8ebef"/><circle cx="27" cy="27" r="8.500" fill="#e6e6e6" stroke="#999"/><path d="M22 24l4 3-4 4M32 22l-4 3.500 4 3.500" fill="none" stroke="#22a83f" stroke-width="2.200"/></svg><i></i></div>
    <div><svg viewBox="0 0 36 36"><path d="M3 4h26l-1 27-24 3z" fill="#f5f5ef" stroke="#666"/><path d="M4 22l24-3v11L5 33z" fill="#42a822"/><circle cx="14" cy="19" r="7.500" fill="#86d53b" stroke="#1c5c10" stroke-width="1.500"/><circle cx="17" cy="12.500" r="3" fill="#fff" stroke="#333"/><path d="M35 2l-8 20" stroke="#e8a91f" stroke-width="3"/><path d="M4 5h24" stroke="#888" stroke-width="2.500" stroke-dasharray="2 2"/></svg><i></i></div>
    <div><svg viewBox="0 0 36 36"><path d="M2 13C5 4 11 0 19 0c10 0 17 7 17 15 0 6-5 9-10 9-4 0-5-2-4-4 2-3 0-9-8-9-5 0-9 1-12 2z" fill="url(#edg)"/><path d="M0 19c0-7 6-10 12-9 6 0 9 4 9 7-4-1-7 4-4 9 3 4 9 5 16 1-4 6-10 9-16 9C7 35 0 28 0 19z" fill="url(#edb)"/></svg><i></i></div>
    <div><svg viewBox="0 0 36 36"><path d="M2 1h33v25H2z" fill="#333638"/><path d="M5 5l4 3-4 3M10 11h4" fill="none" stroke="#fff" stroke-width="1.800"/><path d="M17 14l7-2 4 6-5 8-4 3-8-8z" fill="#3b7df0"/><path d="M10 22l5-3 8 9 1 7-5-4z" fill="#e9403c"/><path d="M23 27l8-9 5 5-12 13z" fill="#a2e02c"/></svg><i></i></div>
    <div class="bg-[#ececec]"><svg><use href="#firefox"/></svg><i class="!w-[75px]"></i></div>
    <div><svg viewBox="0 0 36 36"><path d="M4 1h20l8 8v26H4z" fill="#fff" stroke="#1978b5" stroke-width="2"/><path d="M24 0h9v9z" fill="#1b83c4"/><path d="M9 13h7M9 17h7M9 21h19M9 25h19M9 29h14" stroke="#1978b5" stroke-width="1.800"/><path d="M18 12h11v8H18z" fill="#1978b5"/></svg></div>
    <div><svg viewBox="0 0 36 36"><path d="M4 1h20l8 8v26H4z" fill="#fff" stroke="#2ea51b" stroke-width="2"/><path d="M24 0h9v9z" fill="#35b81e"/><path d="M9 14h17v16H9zM9 18h17M9 22h17M9 26h17M14.500 14v16M20 14v16" fill="none" stroke="#2ea51b" stroke-width="1.500"/><path d="M20 23h8v8h-8z" fill="#2ea51b"/></svg></div>
    <div><svg viewBox="0 0 36 36"><path d="M8 28l10 4 10-4-3 6c-4 2-10 2-14 0z" fill="#9aa5b5"/><path d="M18 1l14 5-2 20-12 7L6 26 4 6z" fill="#16305c" stroke="#c6d3e6" stroke-width="1.200"/><path d="M4 6l14 5 14-5-14-5z" fill="#3c5d94" stroke="#e6eef8" stroke-width="1.500"/><path d="M18 11v22" stroke="#e6eef8" stroke-width="2"/></svg><i></i></div>
    <div><svg viewBox="0 0 36 36"><circle cx="18" cy="18" r="8.500" fill="none" stroke="#3b3b3b" stroke-width="4.500"/><circle cx="18" cy="18" r="11.800" fill="none" stroke="#3b3b3b" stroke-width="4.200" stroke-dasharray="4.600 4.670"/></svg><i></i></div>
    <div><svg viewBox="0 0 36 36"><circle cx="18" cy="18" r="16" fill="#2f2f33" stroke="url(#mus)" stroke-width="3.600"/><circle cx="18" cy="18" r="5" fill="none" stroke="#fff" stroke-width="4.500"/><path d="M24 12h7V7" fill="none" stroke="#e8674a" stroke-width="3.500"/></svg><i></i></div>
    <div><svg viewBox="0 0 36 36"><path d="M0 0h36v36H0z" fill="#1b1b1b"/><path d="M0 26c3-3 8-2 10 4l1 6H0zM36 26c-4-1-8 0-10 4l-1 6h11z" fill="#dedede"/><ellipse cx="19" cy="13" rx="4" ry="6" fill="#eee"/><ellipse cx="28" cy="11" rx="5.500" ry="8" fill="#eee"/><circle cx="19" cy="14" r="2"/><circle cx="27" cy="14" r="2.500"/><path d="M5 22l12-8 14 5-10 11z" fill="#f7931e"/><path d="M0 0h14v11H0z" fill="#fff"/><text x="7" y="9" font-size="9.500" font-weight="700" text-anchor="middle">64</text></svg><i class="!bg-[linear-gradient(to_right,#0078d7_80%,#6aaee4_80%)]"></i></div>
  </div>
  <div class="ml-auto flex items-center">
    <svg class="w-[38px] h-[30px] -mt-[5px]" viewBox="0 0 38 30"><path d="M9 29a7.500 7.500 0 01-1-15C9 4 26 3 28 13c11 0 11 16 0 16z" fill="url(#cld)"/><circle cx="32.500" cy="5" r="4.600" fill="#c42b1c"/></svg>
    <span class="ml-[9px] w-[45px] text-[21px] tracking-[-0.9px] pt-[1px]">6°C</span>
    <span class="w-[91px] text-[21px] tracking-[-0.5px] pt-[1px]">Cloudy</span>
    <svg class="w-[18px] h-[11px]" viewBox="0 0 18 11"><path d="M1 10l8-8.500L17 10" fill="none" stroke="#000" stroke-width="1.600"/></svg>
    <svg class="w-[18px] h-[22px] ml-[18px]" viewBox="0 0 18 22"><path d="M3 5.500h7a1.500 1.500 0 011.500 1.500v8a1.500 1.500 0 01-1.500 1.500H3A1.500 1.500 0 011.500 15V7A1.500 1.500 0 013 5.500zM12 10l4-3v8.500l-4-3M2 2c3-1.500 8-1.500 11 0M2 20c3 1.500 8 1.500 11 0" fill="none" stroke="#000" stroke-width="1.400"/></svg>
    <svg class="w-[20px] h-[20px] ml-[17px]" viewBox="0 0 20 20"><path d="M1 19.500C1.500 9 9 1.500 19 1M5.500 19.500C6 11.500 11 6.500 19 6M10 19.500c.5-5 4-8.500 9-9M14 19.500c0-2.500 2-4.500 5-5" fill="none" stroke="#000" stroke-width="1.300"/><circle cx="17.500" cy="18" r="1.800"/></svg>
    <svg class="w-[24px] h-[20px] ml-[12px]" viewBox="0 0 24 20"><path d="M1 7h3.500L10 2v16l-5.500-5H1zM13.500 7.500c1.300 1.500 1.300 3.500 0 5M17 5c2.500 3 2.500 7 0 10M20 2.500c3.800 4.500 3.800 10.500 0 15" fill="none" stroke="#000" stroke-width="1.400"/></svg>
    <span class="ml-[16px] w-[51px] text-[18px] tracking-[-0.9px]">ENG</span>
    <div class="w-[97px] text-center text-[18px] leading-[28px] tracking-[-0.1px]">9:42 AM<br>2023-02-06</div>
    <svg class="w-[26px] h-[26px] ml-[26px]" viewBox="0 0 26 26"><path d="M1.500 1.500h23v18h-8.500L12.500 24 9 19.500H1.500z" fill="none" stroke="#000" stroke-width="1.500"/></svg>
    <div class="ml-[29px] mr-[6px] w-[2px] h-[60px] bg-[#a8a8a8]"></div>
  </div>
</div>
</body>
</html>
